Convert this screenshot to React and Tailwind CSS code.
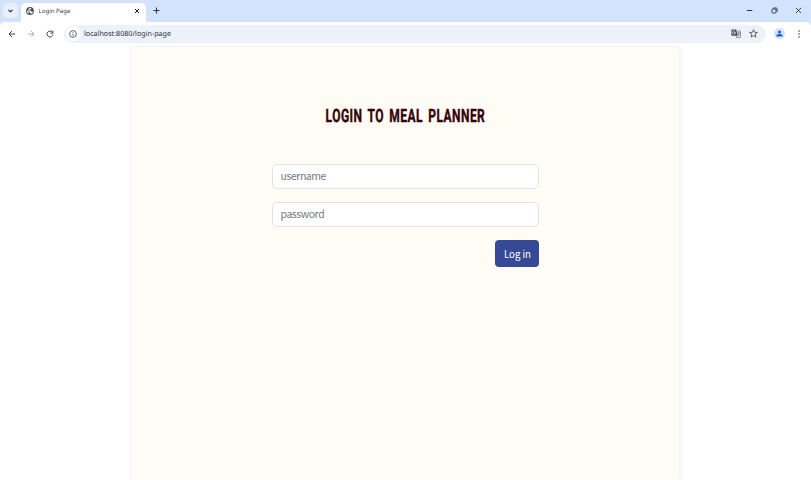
import React from "react";

function TabStrip() {
  return (
    <div className="flex h-[22px] items-start bg-[#d3e3fd]">
      <button className="ml-[3px] mt-[3px] flex h-[15px] w-[15px] items-center justify-center rounded-[5px] bg-[#e9f0fd]">
        <svg width="5" height="4" viewBox="0 0 5 4" fill="none" stroke="#1f1f1f" strokeWidth="1.1"><path d="M.5 .8 2.5 2.8 4.5 .8" /></svg>
      </button>
      <div className="ml-[3px] mt-[3px] flex h-[19px] w-[125px] items-center rounded-t-[5px] bg-white pb-[3px] pl-[5px]">
        <svg width="8" height="8" viewBox="0 0 8 8">
          <circle cx="4" cy="4" r="3.9" fill="#4d5156" />
          <path d="M.9 3.4 2.8 5.1v1.5C1.5 6.1.8 5 .9 3.4ZM3.5 1 5.2.9 5 2.2 3.6 2.6 3.2 3.7 5 3.8 5.7 4.8 7 4.5C6.8 5.8 5.9 6.9 4.5 7.1L4.6 5.8 3.4 5 2 3.4 2.5 2.3Z" fill="#eef1f4" />
        </svg>
        <span className="ml-[4.5px] flex-1 whitespace-nowrap text-[6.1px] leading-[10px] text-[#3c4043]">Login Page</span>
        <svg className="mr-[6px]" width="6" height="6" viewBox="0 0 6 6" stroke="#1f1f1f" strokeWidth="1"><path d="m1 1 4 4M5 1 1 5" /></svg>
      </div>
      <svg className="ml-[6.5px] mt-[7px]" width="7" height="7" viewBox="0 0 7 7" stroke="#303236" strokeWidth="1"><path d="M3.5 .5v6M.5 3.5h6" /></svg>
      <div className="ml-auto mr-[9px] mt-[7px] flex gap-[17.5px]">
        <svg width="7" height="7" viewBox="0 0 7 7" stroke="#303236" strokeWidth="1"><path d="M.8 3.5h5.6" /></svg>
        <svg width="7" height="7" viewBox="0 0 7 7" fill="none" stroke="#303236" strokeWidth=".9"><rect x="1" y="2" width="4" height="4" rx=".6" /><path d="M2.3 1h3a.8.8 0 0 1 .8.8v3" /></svg>
        <svg width="7" height="7" viewBox="0 0 7 7" stroke="#303236" strokeWidth=".9"><path d="m.9.9 5.2 5.2M6.1.9.9 6.1" /></svg>
      </div>
    </div>
  );
}

function Toolbar() {
  return (
    <div className="bg-[#d3e3fd]">
      <div className="flex h-[24px] items-center rounded-t-[5px] bg-white pb-[1px] pl-[8px]">
        <svg width="8" height="8" viewBox="0 0 8 8" fill="none" stroke="#3c4043" strokeWidth="1"><path d="M7.2 4H1.1M3.9 1.1 1 4l2.9 2.9" /></svg>
        <svg className="ml-[11px]" width="8" height="8" viewBox="0 0 8 8" fill="none" stroke="#a3a5a8" strokeWidth=".9"><path d="M.8 4h6.1M4.1 1.1 7 4 4.1 6.9" /></svg>
        <svg className="ml-[11px]" width="8" height="8" viewBox="0 0 8 8" fill="none" stroke="#3c4043" strokeWidth="1"><path d="M6.5 2.3A3 3 0 1 0 7 4.5" /><path d="M6.9.6v2.5H4.4" /></svg>
        <div className="ml-[10px] flex h-[18px] w-[702px] items-center rounded-full bg-[#edf1fa] pl-[1.5px]">
          <div className="flex h-[15px] w-[15px] items-center justify-center rounded-full bg-white">
            <svg width="8" height="8" viewBox="0 0 8 8" fill="none" stroke="#3c4043" strokeWidth=".8"><circle cx="4" cy="4" r="3.4" /><path d="M4 3.6v2.2M4 2v.8" /></svg>
          </div>
          <span className="ml-[3.5px] flex-1 whitespace-nowrap text-[7.15px] leading-[12px] text-[#303236]">localhost:8080/login-page</span>
          <svg width="10" height="9" viewBox="0 0 10 9">
            <path d="M1 .5h4.2l1.6 6.2H1a.6.6 0 0 1-.6-.6v-5A.6.6 0 0 1 1 .5Z" fill="#484b50" />
            <path d="M4.5 3.5H3.1M4.5 3.5A1.6 1.6 0 1 1 4 2.3" fill="none" stroke="#fff" strokeWidth=".65" />
            <path d="M6 2h3a.5.5 0 0 1 .5.5v5.4a.5.5 0 0 1-.5.5H5.2l1.4-1.7M6.2 4h2.7M7.4 3.2V4M8.4 4c-.2 1.2-.9 2-1.7 2.5M6.8 4.8l1.8 1.8" fill="none" stroke="#55585d" strokeWidth=".6" />
          </svg>
          <svg className="ml-[8px] mr-[8px]" width="9" height="9" viewBox="0 0 9 9" fill="none" stroke="#3c4043" strokeWidth=".8" strokeLinejoin="round"><path d="m4.5.7 1.1 2.6 2.8.2-2.2 1.8.7 2.8-2.4-1.5-2.4 1.5.7-2.8L.6 3.5l2.8-.2Z" /></svg>
        </div>
        <div className="ml-[8px] flex h-[11px] w-[11px] items-center justify-center rounded-full bg-[#d3e3fd]">
          <svg width="7" height="7" viewBox="0 0 7 7" fill="#1f5fd0"><circle cx="3.5" cy="2" r="1.55" /><path d="M.4 6.4V5.6C.4 4.6 2 4 3.5 4s3.1.6 3.1 1.6v.8Z" /></svg>
        </div>
        <svg className="ml-[12px]" width="4" height="8" viewBox="0 0 4 8" fill="#3c4043"><circle cx="2" cy="1" r=".8" /><circle cx="2" cy="4" r=".8" /><circle cx="2" cy="7" r=".8" /></svg>
      </div>
    </div>
  );
}

const fieldClass =
  "block h-[25px] w-full rounded-[5px] border border-[#dfe3e8] bg-white px-[7.5px] pb-[2px] text-[10.5px] leading-[16px] tracking-[-0.45px] text-[#212529] outline-none placeholder:text-[#767b80] placeholder:opacity-100";

export default function App() {
  return (
    <div className="flex h-[480px] w-[811px] flex-col overflow-hidden bg-white font-['Noto_Sans','Open_Sans',sans-serif] [text-rendering:geometricPrecision]">
      <TabStrip />
      <Toolbar />
      <main className="mx-auto flex w-[547px] flex-1 flex-col items-center border-t border-[#f7f5ef] bg-[#fffcf5] shadow-[0_0_5px_rgba(0,0,0,0.1)] [clip-path:inset(0_-6px)]">
        <h1 className="mt-[55px] flex h-[28px] w-[160px] items-center justify-center whitespace-nowrap font-['Roboto',sans-serif] text-[18.4px] font-bold leading-[28px] tracking-[0.7px] text-[#330407] [word-spacing:3px] [-webkit-text-stroke:0.45px_#330407]">
          <span className="block scale-x-[0.652] pt-px">LOGIN TO MEAL PLANNER</span>
        </h1>
        <form className="mt-[34px] flex w-[267px] flex-col font-['Noto_Sans_CJK_SC',sans-serif]" onSubmit={(e) => e.preventDefault()}>
          <input className={fieldClass} placeholder="username" />
          <input className={fieldClass + " mt-[13px]"} placeholder="password" type="password" />
          <button className="mt-[13px] flex h-[27px] w-[44px] items-center justify-center self-end whitespace-nowrap rounded-[4px] bg-[#364996] pb-[2px] text-[11px] leading-[16px] text-white">
            <span className="block scale-x-[0.87]">Log in</span>
          </button>
        </form>
      </main>
    </div>
  );
}
